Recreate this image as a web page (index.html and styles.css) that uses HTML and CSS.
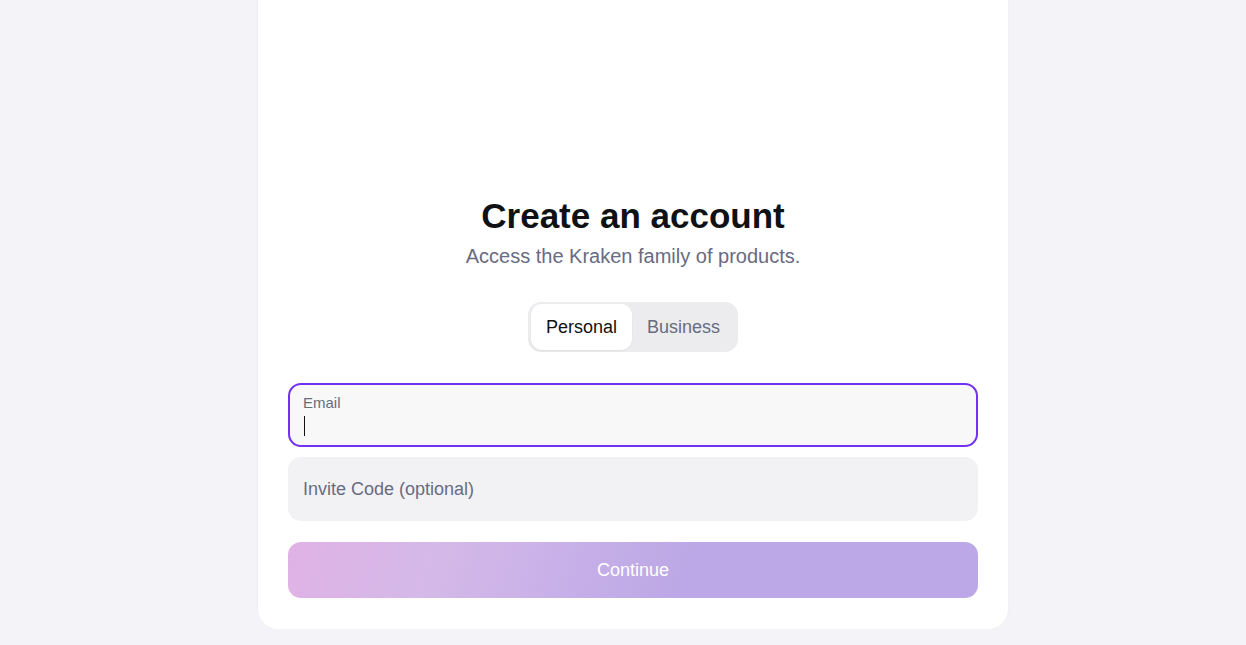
FILE: index.html
```html
<!DOCTYPE html>
<html lang="en">
<head>
    <meta charset="UTF-8">
    <meta name="viewport" content="width=device-width, initial-scale=1.0">
    <title>Create an account</title>
    <link rel="stylesheet" href="styles.css">
</head>
<body>
    <div class="card">
        <div class="logo-space"></div>
        <h1 class="title">Create an account</h1>
        <p class="subtitle">Access the Kraken family of products.</p>

        <div class="toggle">
            <button class="toggle-btn active">Personal</button>
            <button class="toggle-btn">Business</button>
        </div>

        <div class="field focused">
            <label class="field-label" for="email">Email</label>
            <div class="caret"></div>
        </div>
        <div class="field plain">
            <span class="placeholder">Invite Code (optional)</span>
        </div>

        <button class="continue">Continue</button>
    </div>
</body>
</html>
```

FILE: styles.css
```css
* {
    box-sizing: border-box;
}
body {
    margin: 0;
    padding-left: 20px;
    background-color: #f4f3f8;
    font-family: "Liberation Sans", Arial, sans-serif;
    color: #101114;
}
.card {
    width: 750px;
    margin: -20px auto 0;
    background-color: #fff;
    border-radius: 20px;
    box-shadow: 0 0 0 1px #f0eff4;
    padding: 0 30px 31px;
    display: flex;
    flex-direction: column;
    align-items: center;
}
.logo-space {
    height: 216px;
}
.title {
    font-size: 35px;
    font-weight: bold;
    margin: 0;
    line-height: 40px;
    color: #101114;
}
.subtitle {
    font-size: 20px;
    color: #686b82;
    margin: 0;
    line-height: 40px;
}
.toggle {
    margin-top: 26px;
    display: flex;
    background-color: #ececef;
    border-radius: 13px;
    padding: 2px 3px;
    height: 50px;
}
.toggle-btn {
    border: none;
    background: none;
    font-family: inherit;
    font-size: 18px;
    color: #686b82;
    padding: 0 15px;
    border-radius: 11px;
    height: 46px;
}
.toggle-btn.active {
    background-color: #fff;
    color: #101114;
    box-shadow: 0 1px 2px rgba(0, 0, 0, 0.06);
}
.field {
    width: 100%;
    height: 64px;
    border-radius: 13px;
    padding: 0 15px;
}
.field.focused {
    margin-top: 31px;
    background-color: #f8f8f8;
    border: 2px solid #7132f5;
    padding: 9px 13px 0;
}
.field-label {
    display: block;
    font-size: 15px;
    color: #686b82;
    line-height: 18px;
}
.caret {
    width: 1px;
    height: 20px;
    background-color: #101114;
    margin-top: 4px;
    margin-left: 1px;
}
.field.plain {
    margin-top: 10px;
    background-color: #f2f2f4;
    display: flex;
    align-items: center;
}
.placeholder {
    font-size: 18px;
    color: #686b82;
}
.continue {
    margin-top: 21px;
    width: 100%;
    height: 56px;
    border: none;
    border-radius: 13px;
    background: linear-gradient(110deg, #e0b2e6 0%, #d4b9e8 22%, #c8b0e8 40%, #bca8e6 58%, #bca8e6 100%);
    color: #fff;
    font-family: inherit;
    font-size: 18px;
}
```
